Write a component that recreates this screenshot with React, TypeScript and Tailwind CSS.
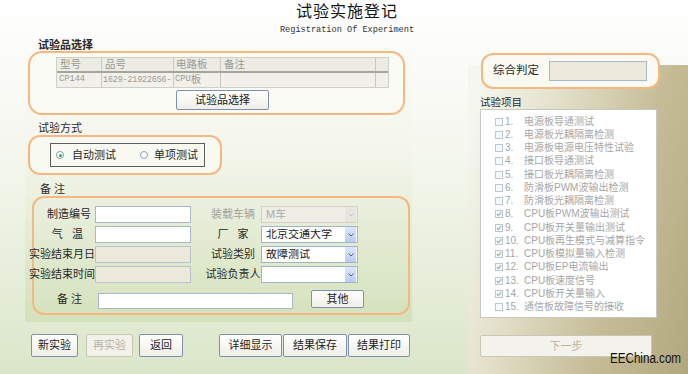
import React from 'react';

const FONT = "font-['Liberation_Sans','Noto_Sans_CJK_SC',sans-serif]";
const MONO = "font-['Liberation_Mono',monospace] text-[8.7px]";

const items = [
  { n: '1.', t: '电源板导通测试', c: false },
  { n: '2.', t: '电源板光耦隔离检测', c: false },
  { n: '3.', t: '电源板电源电压特性试验', c: false },
  { n: '4.', t: '接口板导通测试', c: false },
  { n: '5.', t: '接口板光耦隔离检测', c: false },
  { n: '6.', t: '防滑板PWM波输出检测', c: false },
  { n: '7.', t: '防滑板光耦隔离检测', c: false },
  { n: '8.', t: 'CPU板PWM波输出测试', c: true },
  { n: '9.', t: 'CPU板开关量输出测试', c: true },
  { n: '10.', t: 'CPU板再生模式与减算指令', c: true },
  { n: '11.', t: 'CPU板模拟量输入检测', c: true },
  { n: '12.', t: 'CPU板EP电流输出', c: true },
  { n: '13.', t: 'CPU板速度信号', c: true },
  { n: '14.', t: 'CPU板开关量输入', c: true },
  { n: '15.', t: '通信板故障信号的接收', c: false },
];

const Btn = ({ label, w, h = 'h-[23px]', disabled = false, className = '' }: { label: string; w: string; h?: string; disabled?: boolean; className?: string }) => (
  <div
    className={`${w} ${h} ${className} flex items-center justify-center rounded-[2px] border text-[11px] ${
      disabled
        ? 'border-[#c9c6b6] bg-[#f2f1ea] text-[#b8b4a4]'
        : 'border-[#7d93ad] bg-[linear-gradient(180deg,#ffffff,#efeee8)] text-[#222]'
    }`}
  >
    {label}
  </div>
);

const Select = ({ value, disabled = false }: { value: string; disabled?: boolean }) => (
  <div
    className={`w-[97px] h-[17px] flex items-center border ${
      disabled ? 'border-[#d4d2c6] bg-[#eeede6] text-[#aaa]' : 'border-[#9fb3cc] bg-white text-[#222]'
    }`}
  >
    <span className="flex-1 pl-[4px] text-[11px] leading-none truncate">{value}</span>
    <span
      className={`w-[11px] h-[15px] mr-[1px] flex items-center justify-center ${
        disabled ? 'bg-[#e6e5df]' : 'bg-[linear-gradient(180deg,#dce7fb,#b9cdf3)]'
      }`}
    >
      <svg width="6" height="4" viewBox="0 0 6 4">
        <path d="M0.5 0.5 L3 3 L5.5 0.5" fill="none" stroke={disabled ? '#c4c4c4' : '#4d6185'} strokeWidth="1" />
      </svg>
    </span>
  </div>
);

const Input = ({ disabled = false, w = 'w-[96px]', h = 'h-[17px]' }: { disabled?: boolean; w?: string; h?: string }) => (
  <div className={`${w} ${h} border ${disabled ? 'border-[#b9c3cf] bg-[#ece9db]' : 'border-[#a9b8c9] bg-white'}`} />
);

const Radio = ({ checked }: { checked: boolean }) => (
  <span className="w-[8px] h-[8px] rounded-full border border-[#7f9db9] bg-white flex items-center justify-center">
    {checked && <span className="w-[3px] h-[3px] rounded-full bg-[#3aa03a]" />}
  </span>
);

const Check = ({ checked }: { checked: boolean }) => (
  <span className="w-[8px] h-[8px] border border-[#b8c6d6] bg-[#f7f9fb] flex items-center justify-center">
    {checked && (
      <svg width="6" height="6" viewBox="0 0 6 6">
        <path d="M0.8 3 L2.4 4.6 L5.2 1.2" fill="none" stroke="#9cb59c" strokeWidth="1.1" />
      </svg>
    )}
  </span>
);

export default function App() {
  return (
    <div className={`${FONT} relative w-[688px] h-[374px] overflow-hidden bg-[linear-gradient(180deg,#ffffff_0%,#f3f6ec_45%,#dbe6c9_100%)] text-[#2a2a2a]`}>
      {/* header */}
      <div className="h-[38px] flex flex-col items-center pl-[6px]">
        <div className="mt-[3px] text-[16px] leading-[18px] text-[#111] tracking-[1px]">试验实施登记</div>
        <div className="mt-[4px] font-['Liberation_Mono',monospace] text-[8.6px] leading-[10px] text-[#333]">
          Registration Of Experiment
        </div>
      </div>

      <div className="flex">
        {/* left column */}
        <div className="w-[468px] flex flex-col">
          <div className="ml-[25px] w-[387px] h-[284px] bg-[linear-gradient(180deg,#fcfcf8_0%,#f4f6ec_40%,#d3e1bb_100%)] flex flex-col">
            <div className="h-[13px] pt-[2px] pl-[13px] text-[11px] leading-[11px] font-bold">试验品选择</div>

            {/* box 1 */}
            <div className="ml-[3px] w-[377px] h-[64px] border-2 border-[#f6b880] rounded-[14px] bg-[#fbfbf6] flex flex-col">
              <div className="ml-[26px] mt-[4px] w-[333px] border border-[#cfcfc6] bg-[#f1f0ea] text-[10.5px] text-[#9a9a94]">
                <div className="flex h-[15px] items-center border-b-2 border-[#a5a59c] bg-[#ecebe4]">
                  <span className="w-[45px] pl-[3px] border-r border-[#c9c9c0] h-full flex items-center">型号</span>
                  <span className="w-[72px] pl-[3px] border-r border-[#c9c9c0] h-full flex items-center">品号</span>
                  <span className="w-[47px] pl-[2px] border-r border-[#c9c9c0] h-full flex items-center">电路板</span>
                  <span className="w-[155px] pl-[3px] border-r border-[#c9c9c0] h-full flex items-center">备注</span>
                  <span className="flex-1" />
                </div>
                <div className="flex h-[14px] items-center">
                  <span className={`w-[45px] pl-[2px] border-r border-[#c9c9c0] h-full flex items-center ${MONO}`}>CP144</span>
                  <span className="w-[72px] pl-[1px] border-r border-[#c9c9c0] h-full flex items-center whitespace-nowrap font-['Liberation_Mono',monospace] text-[8.3px] tracking-[-0.1px]">1629-21922656-</span>
                  <span className="w-[47px] pl-[1px] border-r border-[#c9c9c0] h-full flex items-center">
                    <span className={MONO}>CPU</span>板
                  </span>
                  <span className="w-[155px] border-r border-[#c9c9c0] h-full" />
                  <span className="flex-1" />
                </div>
              </div>
              <Btn label="试验品选择" w="w-[93px]" h="h-[20px]" className="ml-[146px] mt-[2px] border-[#6f8fc0]" />
            </div>

            <div className="h-[20px] pt-[8px] pl-[13px] text-[11px] leading-[11px]">试验方式</div>

            {/* box 2 */}
            <div className="ml-[3px] w-[194px] h-[40px] border-2 border-[#f6b880] rounded-[12px] bg-[#f8f9f1]">
              <div className="ml-[20px] mt-[6px] w-[155px] h-[24px] border border-[#5c5c5c] flex items-center text-[11px]">
                <span className="ml-[5px]"><Radio checked /></span>
                <span className="ml-[8px]">自动测试</span>
                <span className="ml-[24px]"><Radio checked={false} /></span>
                <span className="ml-[6px]">单项测试</span>
              </div>
            </div>

            <div className="h-[21px] pt-[9px] pl-[15px] text-[11px] leading-[11px]">备 注</div>

            {/* box 3 */}
            <div className="ml-[7px] w-[378px] h-[119px] border-2 border-[#f6b880] rounded-[12px] flex flex-col pt-[8px] text-[11px]">
              {[
                { l: '制造编号', lp: '', ld: false, r: '装载车辆', rd: true, v: 'M车', rv: true },
                { l: '气   温', lp: 'pr-[8px]', ld: false, r: '厂   家', rd: false, v: '北京交通大学', rv: false },
                { l: '实验结束月日', lp: '', ld: true, r: '试验类别', rd: false, v: '故障测试', rv: false },
                { l: '实验结束时间', lp: '', ld: true, r: '试验负责人', rd: false, v: '', rv: false },
              ].map((row, i) => (
                <div key={i} className="flex items-center h-[17px] mb-[3px]">
                  <span className={`-ml-[5px] w-[62px] text-right whitespace-pre leading-none ${row.lp}`}>{row.l}</span>
                  <span className="ml-[4px]">
                    <Input disabled={row.ld} />
                  </span>
                  <span className={`ml-[14px] w-[56px] text-center whitespace-pre leading-none ${row.rd ? 'text-[#a3a39b]' : ''}`}>{row.r}</span>
                  <Select value={row.v} disabled={row.rv} />
                </div>
              ))}
              <div className="flex items-center h-[18px] mt-[4px]">
                <span className="ml-[23px] w-[30px] text-[11px] leading-none">备 注</span>
                <span className="ml-[11px] mt-[3px]">
                  <Input w="w-[195px]" h="h-[16px]" />
                </span>
                <Btn label="其他" w="w-[53px]" h="h-[18px]" className="ml-[18px]" />
              </div>
            </div>
          </div>

          {/* bottom buttons */}
          <div className="flex mt-[12px]">
            <Btn label="新实验" w="w-[47px]" className="ml-[31px]" />
            <Btn label="再实验" w="w-[47px]" disabled className="ml-[8px]" />
            <Btn label="返回" w="w-[44px]" className="ml-[6px]" />
            <Btn label="详细显示" w="w-[63px]" className="ml-[36px]" />
            <Btn label="结果保存" w="w-[64px]" className="ml-[1px]" />
            <Btn label="结果打印" w="w-[62px]" className="ml-[1px]" />
          </div>
        </div>

        {/* right column */}
        <div className="w-[220px] h-[309px] mt-[27px] flex flex-col bg-[linear-gradient(105deg,#f5f7ee_6%,#e2dfc8_34%,#c6bd98_66%,#b2a87e_100%)]">
          <div className="relative z-10 -mt-[12px] ml-[13px] w-[179px] h-[36px] border-2 border-[#f6b880] rounded-[12px] bg-[#fafaf3] flex items-center">
            <span className="ml-[10px] text-[11.5px] leading-none">综合判定</span>
            <span className="ml-[10px] w-[98px] h-[20px] border border-[#a7bacd] bg-[#ece9db]" />
          </div>
          <div className="h-[20px] pt-[8px] pl-[12px] text-[10.5px] leading-[11px]">试验项目</div>
          <div className="ml-[12px] w-[177px] h-[209px] border border-[#c8c8c2] bg-white pt-[5px] pl-[14px] text-[10px] text-[#a6a6a6]">
            {items.map((it) => (
              <div key={it.n} className="h-[13.25px] flex items-center whitespace-nowrap">
                <Check checked={it.c} />
                <span className="ml-[2px] min-w-[19px] leading-none">{it.n}</span>
                <span className="leading-none">{it.t}</span>
              </div>
            ))}
          </div>
          <Btn label="下一步" w="w-[172px]" h="h-[22px]" disabled className="ml-[12px] mt-[17px] border-[#b8b7ad] bg-[#f3f2ec]" />
        </div>
      </div>

      <div className="absolute left-[610px] top-[348px] origin-left scale-x-[0.83] text-[14px] text-[#111] font-['Liberation_Sans',sans-serif]">
        EEChina.com
      </div>
    </div>
  );
}
